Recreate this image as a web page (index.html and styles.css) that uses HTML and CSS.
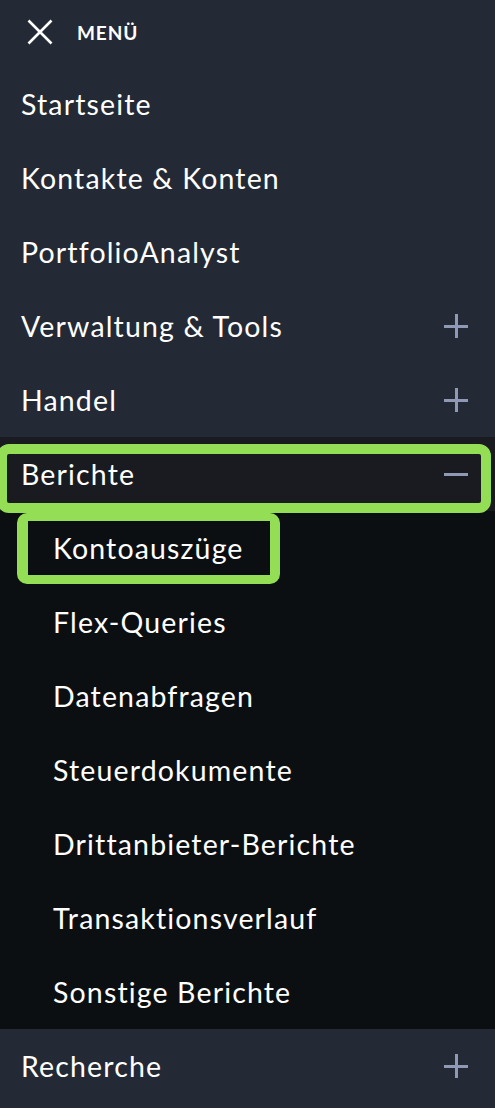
FILE: index.html
```html
<!DOCTYPE html>
<html lang="de">
<head>
<meta charset="utf-8">
<title>Menü</title>
<link rel="stylesheet" href="styles.css">
</head>
<body>
<nav class="menu">
  <div class="menu-header">
    <svg class="close-icon" width="26" height="26" viewBox="0 0 26 26" aria-hidden="true">
      <path d="M1.5 1.5 L24.5 24.5 M24.5 1.5 L1.5 24.5" stroke="#ffffff" stroke-width="2.6" fill="none"/>
    </svg>
    <span class="menu-title">MENÜ</span>
  </div>
  <ul class="menu-list">
    <li class="item"><span class="label">Startseite</span></li>
    <li class="item"><span class="label">Kontakte &amp; Konten</span></li>
    <li class="item"><span class="label">PortfolioAnalyst</span></li>
    <li class="item"><span class="label">Verwaltung &amp; Tools</span><span class="toggle plus"></span></li>
    <li class="item"><span class="label">Handel</span><span class="toggle plus"></span></li>
    <li class="item open"><span class="label">Berichte</span><span class="toggle minus"></span><span class="highlight hl-parent"></span></li>
    <li class="sub">
      <ul class="sub-list">
        <li class="sub-item"><span class="label">Kontoauszüge</span><span class="highlight hl-child"></span></li>
        <li class="sub-item"><span class="label">Flex-Queries</span></li>
        <li class="sub-item"><span class="label">Datenabfragen</span></li>
        <li class="sub-item"><span class="label">Steuerdokumente</span></li>
        <li class="sub-item"><span class="label">Drittanbieter-Berichte</span></li>
        <li class="sub-item"><span class="label">Transaktionsverlauf</span></li>
        <li class="sub-item"><span class="label">Sonstige Berichte</span></li>
      </ul>
    </li>
    <li class="item"><span class="label">Recherche</span><span class="toggle plus"></span></li>
  </ul>
</nav>
</body>
</html>
```
FILE: styles.css
```css
html, body {
  margin: 0;
  padding: 0;
  background: #232a35;
}
body {
  font-family: "Lato", "Noto Sans", sans-serif;
  color: #ffffff;
  -webkit-font-smoothing: antialiased;
}
.menu {
  width: 495px;
  min-height: 1108px;
  background: #232a35;
}
.menu-header {
  height: 67px;
  display: flex;
  align-items: center;
  padding-left: 27px;
  box-sizing: border-box;
  padding-bottom: 3px;
}
.close-icon {
  display: block;
  flex: none;
}
.menu-title {
  margin-left: 24px;
  font-size: 19px;
  font-weight: 700;
  letter-spacing: 0.9px;
}
.menu-list, .sub-list {
  list-style: none;
  margin: 0;
  padding: 0;
}
.item {
  position: relative;
  height: 74px;
  display: flex;
  align-items: center;
  justify-content: space-between;
  padding: 0 27px 0 21px;
  box-sizing: border-box;
  font-size: 28.5px;
  letter-spacing: 1.15px;
}
.item.open {
  background: #191b20;
}
.sub {
  background: #0c0f12;
}
.sub-item {
  position: relative;
  height: 74px;
  display: flex;
  align-items: center;
  padding-left: 53px;
  box-sizing: border-box;
  font-size: 28.5px;
  letter-spacing: 1.15px;
}
.label {
  position: relative;
  z-index: 1;
}
.toggle {
  position: relative;
  width: 24px;
  height: 24px;
  flex: none;
}
.toggle::before,
.toggle::after {
  content: "";
  position: absolute;
  background: #8f98b4;
}
.toggle::before {
  left: 0;
  top: 10.5px;
  width: 24px;
  height: 3px;
}
.plus::after {
  left: 10.5px;
  top: 0;
  width: 3px;
  height: 24px;
}
.highlight {
  position: absolute;
  box-sizing: border-box;
  border: 10px solid #93de55;
  pointer-events: none;
}
.hl-parent {
  left: -3px;
  top: 7px;
  width: 494px;
  height: 69px;
  border-radius: 12px;
}
.hl-child {
  left: 17px;
  top: 2px;
  width: 263px;
  height: 71px;
  border-width: 8px 10px 9px 11px;
  border-radius: 10px;
}
```
